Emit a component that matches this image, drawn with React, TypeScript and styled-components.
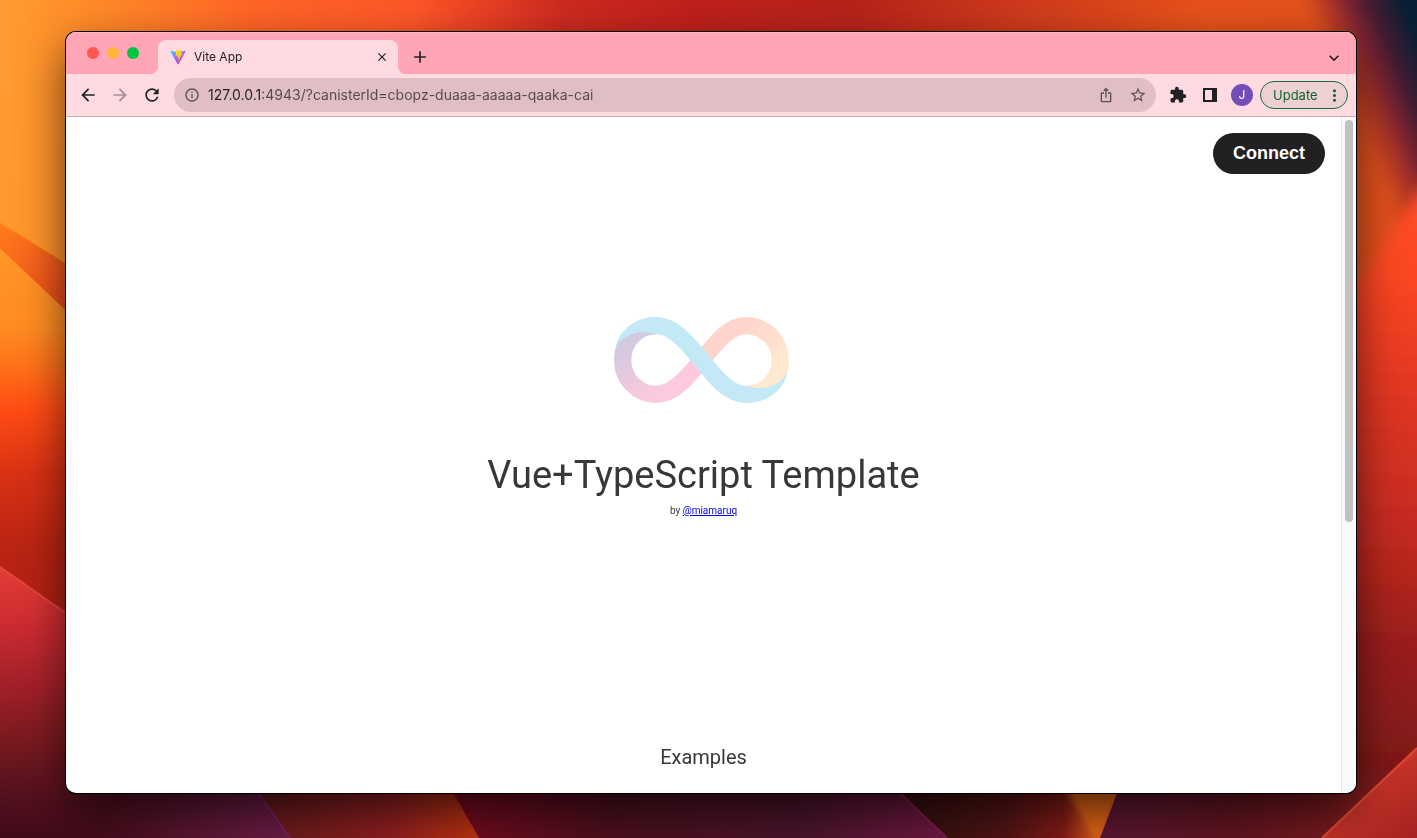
import React from "react";
import styled, { createGlobalStyle } from "styled-components";
import {
  MdAdd,
  MdArrowBack,
  MdArrowForward,
  MdClose,
  MdExpandMore,
  MdExtension,
  MdInfoOutline,
  MdIosShare,
  MdMoreVert,
  MdRefresh,
  MdStarBorder,
} from "react-icons/md";

const GlobalStyle = createGlobalStyle`
  *, *::before, *::after { box-sizing: border-box; }
  body {
    margin: 0;
    font-family: Inter, "Liberation Sans", sans-serif;
    color: #202124;
  }
  button { font: inherit; color: inherit; }
`;

const Desktop = styled.div`
  display: flex;
  min-height: 100vh;
  padding: 32px 61px 45px 66px;
  background: #8a1c1a;
`;

const WallpaperSvg = styled.svg`
  position: fixed;
  inset: 0;
  width: 100%;
  height: 100%;
`;

const BrowserWindow = styled.div`
  position: relative;
  flex: 1;
  min-width: 0;
  display: flex;
  flex-direction: column;
  border-radius: 10px;
  overflow: hidden;
  background: #fff;
  box-shadow: 0 0 0 1px #000, 0 18px 44px rgba(0, 0, 0, 0.62);
`;

const TabStrip = styled.div`
  display: flex;
  align-items: flex-end;
  height: 42px;
  padding-right: 6px;
  background: #ffa5b6;
  box-shadow: inset 0 1px 0 #ffbdc9;
`;

const WindowControls = styled.div`
  display: flex;
  gap: 8px;
  height: 42px;
  padding: 15px 19px 0 21px;
`;

const ControlDot = styled.button<{ $color: string }>`
  width: 12px;
  height: 12px;
  padding: 0;
  border: 0;
  border-radius: 50%;
  background: ${(p) => p.$color};
`;

const Tab = styled.div`
  position: relative;
  display: flex;
  align-items: center;
  gap: 8px;
  width: 240px;
  height: 34px;
  padding: 0 8px 0 12px;
  border-radius: 8px 8px 0 0;
  background: #ffdbe1;
  font-size: 12px;

  &::before,
  &::after {
    content: "";
    position: absolute;
    bottom: 0;
    width: 8px;
    height: 8px;
  }
  &::before {
    left: -8px;
    background: radial-gradient(circle at 0 0, transparent 8px, #ffdbe1 8px);
  }
  &::after {
    right: -8px;
    background: radial-gradient(circle at 100% 0, transparent 8px, #ffdbe1 8px);
  }
`;

const TabTitle = styled.span`
  flex: 1;
  line-height: 16px;
`;

const IconButton = styled.button<{ $size?: number; $color?: string }>`
  display: flex;
  align-items: center;
  justify-content: center;
  flex: none;
  width: ${(p) => p.$size ?? 32}px;
  height: ${(p) => p.$size ?? 32}px;
  padding: 0;
  border: 0;
  background: none;
  color: ${(p) => p.$color ?? "#202124"};
`;

const Spacer = styled.div`
  flex: 1;
`;

const NewTab = styled.div`
  padding: 0 0 1px 6px;
`;

const Toolbar = styled.div`
  display: flex;
  align-items: center;
  height: 43px;
  padding: 0 8px 0 6px;
  border-bottom: 1px solid #cfa6b1;
  background: #ffdbe1;
`;

const AddressBar = styled.label`
  flex: 1;
  min-width: 0;
  display: flex;
  align-items: center;
  height: 34px;
  margin: 0 6px;
  padding: 0 2px 0 10px;
  border-radius: 17px;
  background: #dfbfc4;
  color: #5b5054;
`;

/* The host part of the address is darker than the path after it. */
const AddressInput = styled.input`
  flex: 1;
  min-width: 0;
  height: 24px;
  margin-left: 8px;
  padding: 0;
  border: 0;
  outline: 0;
  font: 14px/24px Inter, "Liberation Sans", sans-serif;
  background: linear-gradient(to right, #202124 54px, #54494d 54px);
  background-clip: text;
  -webkit-background-clip: text;
  -webkit-text-fill-color: transparent;
`;

const Avatar = styled.button`
  width: 22px;
  height: 22px;
  margin: 0 7px 0 5px;
  padding: 0;
  border: 0;
  border-radius: 50%;
  background: #744db8;
  color: #fff;
  font-size: 12px;
  line-height: 22px;
`;

const UpdateButton = styled.button`
  display: flex;
  align-items: center;
  justify-content: space-between;
  width: 88px;
  height: 28px;
  padding: 0 3px 0 12px;
  border: 1px solid #146c43;
  border-radius: 14px;
  background: #edd0d2;
  color: #0d652d;
  font-size: 13px;
`;

const Viewport = styled.div`
  flex: 1;
  display: flex;
`;

const Page = styled.main`
  flex: 1;
  min-width: 0;
  display: flex;
  flex-direction: column;
  color: #37383a;
  font-family: Roboto, "Liberation Sans", sans-serif;
`;

const PageHeader = styled.header`
  display: flex;
  justify-content: flex-end;
  padding: 16px 16px 0;
`;

const ConnectButton = styled.button`
  height: 41px;
  padding: 0 20px 1px;
  border: 0;
  border-radius: 21px;
  background: #212124;
  color: #fff;
  font: bold 18px/40px "Liberation Sans", sans-serif;
`;

const Hero = styled.section`
  display: flex;
  flex-direction: column;
  align-items: center;
  padding-top: 143px;
`;

const LogoSvg = styled.svg`
  width: 175px;
  height: 86px;
  margin-right: 4px;
`;

const Title = styled.h1`
  margin: 48px 0 0;
  font-size: 38px;
  font-weight: 400;
  line-height: 48px;
`;

const Byline = styled.p`
  margin: 5px 0 0;
  font-size: 10px;
  line-height: 14px;

  a { color: #0000ee; }
`;

const Examples = styled.h2`
  margin: 227px 0 24px;
  font-size: 20px;
  font-weight: 400;
  line-height: 24px;
  text-align: center;
`;

const ScrollTrack = styled.div`
  width: 15px;
  padding: 3px;
  border-left: 1px solid #e5e5e5;
  background: #fafafa;
`;

const ScrollThumb = styled.div`
  width: 8px;
  height: 60%;
  border-radius: 4px;
  background: #c1c1c1;
`;

type Stop = [number, string];

function Gradient({ id, from, to, stops }: { id: string; from: [number, number]; to: [number, number]; stops: Stop[] }) {
  return (
    <linearGradient id={id} gradientUnits="userSpaceOnUse" x1={from[0]} y1={from[1]} x2={to[0]} y2={to[1]}>
      {stops.map(([offset, color]) => (
        <stop key={offset} offset={offset} stopColor={color} />
      ))}
    </linearGradient>
  );
}

function Wallpaper() {
  return (
    <WallpaperSvg viewBox="0 0 1417 838" preserveAspectRatio="none" aria-hidden="true">
      <defs>
        <Gradient id="top" from={[0, 0]} to={[1417, 60]} stops={[[0, "#ff9d30"], [0.06, "#ff8c29"], [0.18, "#ff6426"], [0.29, "#fd5728"], [0.34, "#e84024"], [0.4, "#ca2a20"], [0.49, "#be201c"], [0.6, "#b6231a"], [0.72, "#ce3a1c"], [0.85, "#e6521b"], [1, "#e0501c"]]} />
        <Gradient id="leftMid" from={[0, 230]} to={[0, 620]} stops={[[0, "#ff9828"], [0.25, "#ff8c22"], [0.34, "#ff7419"], [0.46, "#ff4c14"], [0.62, "#da3214"], [0.82, "#b92413"], [1, "#b01f14"]]} />
        <Gradient id="wedge" from={[0, 230]} to={[66, 300]} stops={[[0, "#ff7a1c"], [1, "#ec4a1a"]]} />
        <Gradient id="leftLow" from={[20, 570]} to={[0, 838]} stops={[[0, "#e23c38"], [0.2, "#cd2c30"], [0.42, "#a4202a"], [0.64, "#78191f"], [0.85, "#52101d"], [1, "#3e0a1a"]]} />
        <Gradient id="bottomA" from={[60, 838]} to={[290, 815]} stops={[[0, "rgba(67, 12, 26, 0)"], [0.5, "#54142c"], [1, "#6b1c47"]]} />
        <Gradient id="bottomB" from={[260, 800]} to={[475, 838]} stops={[[0, "#611a1a"], [0.6, "#8d1e20"], [1, "#b8330f"]]} />
        <Gradient id="bottomC" from={[460, 820]} to={[945, 838]} stops={[[0, "#730a1e"], [0.3, "#4b0f1c"], [0.7, "#49142a"], [1, "#6d1740"]]} />
        <Gradient id="bottomD" from={[920, 820]} to={[1095, 820]} stops={[[0, "#34100f"], [0.5, "#521414"], [0.82, "#811a16"], [1, "#d4581a"]]} />
        <Gradient id="bottomE" from={[1110, 820]} to={[1350, 790]} stops={[[0, "#5a1630"], [0.5, "#60151f"], [1, "#7c1a1c"]]} />
        <Gradient id="right" from={[1417, 190]} to={[1400, 760]} stops={[[0, "#ff4e25"], [0.15, "#fb4624"], [0.35, "#e23722"], [0.6, "#c32a20"], [0.8, "#991e1b"], [1, "#801919"]]} />
        <Gradient id="rightLow" from={[1360, 790]} to={[1400, 838]} stops={[[0, "#c9352a"], [1, "#a92420"]]} />
        <linearGradient id="night" gradientUnits="userSpaceOnUse" x1="1434" y1="18" x2="1320" y2="66">
          <stop offset="0" stopColor="#04203a" />
          <stop offset="0.2" stopColor="#0c1e32" />
          <stop offset="0.43" stopColor="#431c32" />
          <stop offset="0.6" stopColor="#7f2430" />
          <stop offset="0.78" stopColor="#b43824" stopOpacity="0.85" />
          <stop offset="1" stopColor="#e0501c" stopOpacity="0" />
        </linearGradient>
        <filter id="soft"><feGaussianBlur stdDeviation="3" /></filter>
        <filter id="haze" x="-50%" width="200%"><feGaussianBlur stdDeviation="7" /></filter>
      </defs>
      <rect width="1417" height="838" fill="url(#top)" />
      <rect x="1200" width="217" height="400" fill="url(#night)" />
      <path d="M1300 355L1357 286C1390 240 1405 205 1440 165V880H1300Z" fill="url(#right)" filter="url(#haze)" />
      <path d="M0 248L100 343V640H0Z" fill="url(#leftMid)" />
      <path d="M0 222L100 283V343L0 248Z" fill="url(#wedge)" />
      <path d="M0 222L100 283" stroke="#ff9422" strokeWidth="2" />
      <path d="M0 567L100 637V770H300V838H0Z" fill="url(#leftLow)" />
      <path d="M0 567L100 637" stroke="#e8443c" strokeWidth="2" />
      <path d="M60 770H242L290 838H60Z" fill="url(#bottomA)" />
      <path d="M242 770L290 838H479L440 770Z" fill="url(#bottomB)" />
      <path d="M242 770L290 838" stroke="#782062" strokeWidth="2" />
      <path d="M440 770L479 838H947L876 770Z" fill="url(#bottomC)" />
      <path d="M876 770L947 838H1100L1118 770Z" fill="url(#bottomD)" />
      <path d="M876 770L947 838" stroke="#7c1c4c" strokeWidth="2" />
      <path d="M1055 770L1095 838H1101L1124 770Z" fill="#dc6419" filter="url(#soft)" />
      <path d="M1126 770L1100 838H1330L1400 770Z" fill="url(#bottomE)" />
      <path d="M1417 748L1322 838H1417Z" fill="url(#rightLow)" />
      <path d="M1417 748L1322 838" stroke="#e24a30" strokeWidth="2" />
    </WallpaperSvg>
  );
}

function ViteLogo() {
  return (
    <svg width="16" height="16" viewBox="0 0 410 404" aria-hidden="true">
      <defs>
        <Gradient id="viteBody" from={[6, 33]} to={[235, 344]} stops={[[0, "#41d1ff"], [1, "#bd34fe"]]} />
        <Gradient id="viteBolt" from={[194, 9]} to={[236, 293]} stops={[[0, "#ffea83"], [0.08, "#ffdd35"], [1, "#ffa800"]]} />
      </defs>
      <path fill="url(#viteBody)" d="M399.641 59.525L215.643 388.545C211.844 395.338 202.084 395.378 198.228 388.618L10.582 59.556C6.381 52.19 12.68 43.267 21.028 44.759L205.223 77.682C206.398 77.892 207.601 77.89 208.776 77.676L389.119 44.806C397.439 43.289 403.768 52.143 399.641 59.525Z" />
      <path fill="url(#viteBolt)" d="M292.965 1.574L156.801 28.255C154.563 28.694 152.906 30.59 152.771 32.866L144.395 174.33C144.198 177.662 147.258 180.248 150.51 179.498L188.42 170.749C191.967 169.931 195.172 173.055 194.443 176.622L183.18 231.775C182.422 235.487 185.907 238.661 189.532 237.56L212.947 230.446C216.577 229.344 220.065 232.527 219.297 236.242L201.398 322.875C200.278 328.294 207.486 331.249 210.492 326.603L212.5 323.5L323.454 102.072C325.312 98.365 322.108 94.137 318.036 94.923L279.014 102.454C275.347 103.161 272.227 99.746 273.262 96.158L298.731 7.867C299.767 4.273 296.636 0.855 292.965 1.574Z" />
    </svg>
  );
}

function SidePanelIcon() {
  return (
    <svg width="14" height="14" viewBox="0 0 14 14" aria-hidden="true">
      <path fill="currentColor" fillRule="evenodd" d="M0 0H14V14H0ZM2 2V12H9V2Z" />
    </svg>
  );
}

function InfinityLogo() {
  return (
    <LogoSvg viewBox="42 50 525 258" role="img" aria-label="Internet Computer">
      <defs>
        <Gradient id="loopLeft" from={[70, 110]} to={[165, 270]} stops={[[0, "#cdcae0"], [0.5, "#e2c9df"], [1, "#fcc9de"]]} />
        <Gradient id="loopRight" from={[420, 90]} to={[540, 190]} stops={[[0, "#ffd4cd"], [0.5, "#ffddce"], [1, "#ffe9d0"]]} />
      </defs>
      <g fill="none" strokeWidth="52">
        <path stroke="url(#loopLeft)" d="M168 76A100 103 0 0 0 168 282C222 282 260 232 305 180" />
        <path stroke="url(#loopRight)" d="M305 180C350 126 385 76 438 76A103 103 0 0 1 438 282" />
        <path stroke="#c3e9f6" d="M168 76C222 76 264 130 305 180C346 230 385 282 438 282" />
      </g>
      <path fill="#c3e9f6" d="M172 50H168C108 50 59 86 46 142C70 100 118 86 172 102Z" />
      <path fill="#c3e9f6" d="M434 308H438C500 308 550 272 563 216C538 258 488 274 434 256Z" />
    </LogoSvg>
  );
}

export default function App() {
  return (
    <Desktop>
      <GlobalStyle />
      <Wallpaper />
      <BrowserWindow>
        <TabStrip>
          <WindowControls>
            <ControlDot $color="#ff5652" aria-label="Close window" />
            <ControlDot $color="#ffb638" aria-label="Minimize window" />
            <ControlDot $color="#00c540" aria-label="Zoom window" />
          </WindowControls>
          <Tab>
            <ViteLogo />
            <TabTitle>Vite App</TabTitle>
            <IconButton $size={16} aria-label="Close tab">
              <MdClose size={14} />
            </IconButton>
          </Tab>
          <NewTab>
            <IconButton aria-label="New tab">
              <MdAdd size={20} />
            </IconButton>
          </NewTab>
          <Spacer />
          <IconButton aria-label="Search tabs">
            <MdExpandMore size={20} />
          </IconButton>
        </TabStrip>
        <Toolbar>
          <IconButton aria-label="Back">
            <MdArrowBack size={20} />
          </IconButton>
          <IconButton aria-label="Forward" $color="#a38e93">
            <MdArrowForward size={20} />
          </IconButton>
          <IconButton aria-label="Reload">
            <MdRefresh size={20} />
          </IconButton>
          <AddressBar>
            <MdInfoOutline size={16} />
            <AddressInput
              aria-label="Address"
              defaultValue="127.0.0.1:4943/?canisterId=cbopz-duaaa-aaaaa-qaaka-cai"
            />
            <IconButton aria-label="Share" $color="#5b5054">
              <MdIosShare size={16} />
            </IconButton>
            <IconButton aria-label="Bookmark" $color="#5b5054">
              <MdStarBorder size={18} />
            </IconButton>
          </AddressBar>
          <IconButton aria-label="Extensions">
            <MdExtension size={18} />
          </IconButton>
          <IconButton aria-label="Side panel">
            <SidePanelIcon />
          </IconButton>
          <Avatar aria-label="Profile J">J</Avatar>
          <UpdateButton>
            Update
            <MdMoreVert size={19} />
          </UpdateButton>
        </Toolbar>
        <Viewport>
          <Page>
            <PageHeader>
              <ConnectButton>Connect</ConnectButton>
            </PageHeader>
            <Hero>
              <InfinityLogo />
              <Title>Vue+TypeScript Template</Title>
              <Byline>
                by <a href="#miamaruq">@miamaruq</a>
              </Byline>
            </Hero>
            <Examples>Examples</Examples>
          </Page>
          <ScrollTrack>
            <ScrollThumb />
          </ScrollTrack>
        </Viewport>
      </BrowserWindow>
    </Desktop>
  );
}
